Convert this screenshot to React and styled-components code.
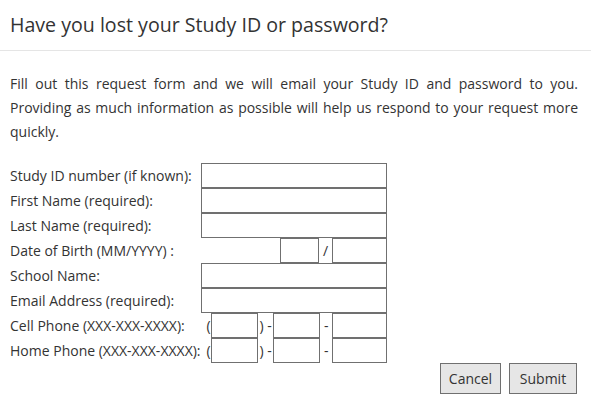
import React from 'react';
import styled, { createGlobalStyle } from 'styled-components';

const GlobalStyle = createGlobalStyle`
  body {
    margin: 0;
    background: #fff;
    font-family: "Open Sans", "Liberation Sans", sans-serif;
    color: #333;
  }
`;

const Header = styled.div`
  height: 50px;
  padding: 0 10px;
  border-bottom: 1px solid #e5e5e5;
  display: flex;
  align-items: center;

  h1 {
    margin: 0;
    font-size: 19.6px;
    font-weight: 400;
    color: #333;
    line-height: 1;
  }
`;

const Body = styled.div`
  padding: 21px 13px 0 10px;
`;

const Intro = styled.p`
  margin: 0 0 19px;
  font-size: 14px;
  line-height: 24px;
  text-align: justify;
`;

const FormGrid = styled.div`
  display: grid;
  grid-template-columns: 191px 186px;
  grid-auto-rows: 25px;
`;

const Label = styled.label`
  font-size: 14px;
  display: flex;
  align-items: center;
  white-space: nowrap;
`;

const Cell = styled.div`
  display: flex;
  align-items: stretch;
  justify-content: ${(p) => p.$justify || 'flex-start'};
`;

const Box = styled.input`
  box-sizing: border-box;
  width: ${(p) => p.$w || '100%'};
  height: 25px;
  margin: 0;
  padding: 0 3px;
  border: 1px solid #707070;
  border-radius: 0;
  background: #fff;
  font: inherit;
  font-size: 14px;
  outline: none;
`;

const Sep = styled.span`
  width: ${(p) => p.$w};
  font-size: 14px;
  display: flex;
  align-items: center;
  justify-content: ${(p) => p.$align || 'center'};
  color: #333;
`;

const Actions = styled.div`
  display: flex;
  justify-content: flex-end;
  gap: 8px;
  padding-right: 1px;
`;

const Button = styled.button`
  box-sizing: border-box;
  width: ${(p) => p.$w};
  height: 31px;
  padding: 0;
  border: 1px solid #707070;
  border-radius: 0;
  background: #e6e6e6;
  color: #333;
  font-family: "Open Sans", "Liberation Sans", sans-serif;
  font-size: 14px;
`;

function PhoneRow() {
  return (
    <Cell>
      <Sep $w="10px" $align="flex-end">(</Sep>
      <Box $w="47px" />
      <Sep $w="16px">) -</Sep>
      <Box $w="47px" />
      <Sep $w="12px">-</Sep>
      <Box $w="55px" />
    </Cell>
  );
}

export default function App() {
  return (
    <>
      <GlobalStyle />
      <Header>
        <h1>Have you lost your Study ID or password?</h1>
      </Header>
      <Body>
        <Intro>
          Fill out this request form and we will email your Study ID and password to you.
          Providing as much information as possible will help us respond to your request more
          quickly.
        </Intro>
        <FormGrid>
          <Label>Study ID number (if known):</Label>
          <Cell><Box /></Cell>
          <Label>First Name (required):</Label>
          <Cell><Box /></Cell>
          <Label>Last Name (required):</Label>
          <Cell><Box /></Cell>
          <Label>Date of Birth (MM/YYYY) :</Label>
          <Cell $justify="flex-end">
            <Box $w="39px" />
            <Sep $w="13px">/</Sep>
            <Box $w="55px" />
          </Cell>
          <Label>School Name:</Label>
          <Cell><Box /></Cell>
          <Label>Email Address (required):</Label>
          <Cell><Box /></Cell>
          <Label>Cell Phone (XXX-XXX-XXXX):</Label>
          <PhoneRow />
          <Label>Home Phone (XXX-XXX-XXXX):</Label>
          <PhoneRow />
        </FormGrid>
        <Actions>
          <Button $w="61px">Cancel</Button>
          <Button $w="68px">Submit</Button>
        </Actions>
      </Body>
    </>
  );
}
